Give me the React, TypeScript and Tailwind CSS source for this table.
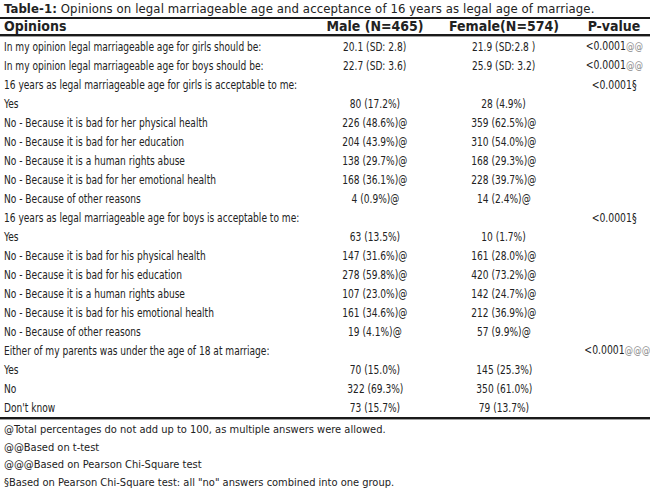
import React from 'react';

type Row = {
  label: string;
  male?: string;
  female?: string;
  p?: string;
  mark?: string;
};

const rows: Row[] = [
  { label: 'In my opinion legal marriageable age for girls should be:', male: '20.1 (SD: 2.8)', female: '21.9 (SD:2.8 )', p: '<0.0001', mark: '@@' },
  { label: 'In my opinion legal marriageable age for boys should be:', male: '22.7 (SD: 3.6)', female: '25.9 (SD: 3.2)', p: '<0.0001', mark: '@@' },
  { label: '16 years as legal marriageable age for girls is acceptable to me:', p: '<0.0001§' },
  { label: 'Yes', male: '80 (17.2%)', female: '28 (4.9%)' },
  { label: 'No - Because it is bad for her physical health', male: '226 (48.6%)@', female: '359 (62.5%)@' },
  { label: 'No - Because it is bad for her education', male: '204 (43.9%)@', female: '310 (54.0%)@' },
  { label: 'No - Because it is a human rights abuse', male: '138 (29.7%)@', female: '168 (29.3%)@' },
  { label: 'No - Because it is bad for her emotional health', male: '168 (36.1%)@', female: '228 (39.7%)@' },
  { label: 'No - Because of other reasons', male: '4 (0.9%)@', female: '14 (2.4%)@' },
  { label: '16 years as legal marriageable age for boys is acceptable to me:', p: '<0.0001§' },
  { label: 'Yes', male: '63 (13.5%)', female: '10 (1.7%)' },
  { label: 'No - Because it is bad for his physical health', male: '147 (31.6%)@', female: '161 (28.0%)@' },
  { label: 'No - Because it is bad for his education', male: '278 (59.8%)@', female: '420 (73.2%)@' },
  { label: 'No - Because it is a human rights abuse', male: '107 (23.0%)@', female: '142 (24.7%)@' },
  { label: 'No - Because it is bad for his emotional health', male: '161 (34.6%)@', female: '212 (36.9%)@' },
  { label: 'No - Because of other reasons', male: '19 (4.1%)@', female: '57 (9.9%)@' },
  { label: 'Either of my parents was under the age of 18 at marriage:', p: '<0.0001', mark: '@@@' },
  { label: 'Yes', male: '70 (15.0%)', female: '145 (25.3%)' },
  { label: 'No', male: '322 (69.3%)', female: '350 (61.0%)' },
  { label: "Don't know", male: '73 (15.7%)', female: '79 (13.7%)' },
];

const notes = [
  '@Total percentages do not add up to 100, as multiple answers were allowed.',
  '@@Based on t-test',
  '@@@Based on Pearson Chi-Square test',
  '§Based on Pearson Chi-Square test: all "no" answers combined into one group.',
];

const grid = 'grid grid-cols-[317px_108px_150px_70px] items-center';

export default function App() {
  return (
    <div
      className="w-[650px] h-[488px] bg-white text-[#222] overflow-hidden"
      style={{ fontFamily: '"DejaVu Sans Condensed", "Liberation Sans Narrow", "Liberation Sans", sans-serif' }}
    >
      <div className="h-[17px] pl-1 pt-[1px] text-[13px] leading-[15px] tracking-[0.1px] whitespace-nowrap">
        <span className="font-bold">Table-1:</span> Opinions on legal marriageable age and acceptance of 16 years as legal age of marriage.
      </div>

      <div className="border-t-2 border-[#1a1a1a]">
        <div className={`${grid} h-[15px] pl-1 text-[14px] leading-[15px] font-bold`}>
          <div>Opinions</div>
          <div className="text-center">Male (N=465)</div>
          <div className="text-center">Female(N=574)</div>
          <div className="text-center">P-value</div>
        </div>
        <div className="border-t-2 border-[#1a1a1a] border-b border-b-[#a0a0a0] h-0" />

        <div className="text-[12px] leading-[14px]">
          {rows.map((r, i) => (
            <div key={i} className={`${grid} h-[19px] pl-1`}>
              <div className="whitespace-nowrap">
                <span className="inline-block origin-left scale-x-[0.84]">{r.label}</span>
              </div>
              <div className="text-center whitespace-nowrap">
                <span className="inline-block scale-x-[0.84]">{r.male}</span>
              </div>
              <div className="text-center whitespace-nowrap">
                <span className="inline-block scale-x-[0.84]">{r.female}</span>
              </div>
              <div className="text-center whitespace-nowrap">
                <span className="inline-block scale-x-[0.86]">
                  {r.p}
                  {r.mark && <span className="text-[#8c8c8c] text-[11px]">{r.mark}</span>}
                </span>
              </div>
            </div>
          ))}
        </div>

        <div className="border-t-2 border-[#1a1a1a] border-b border-b-[#a0a0a0] h-0" />
      </div>

      <div className="pl-1 pt-[1px] text-[11px]">
        {notes.map((n, i) => (
          <div key={i} className="h-[17.5px] leading-[17.5px] whitespace-nowrap">{n}</div>
        ))}
      </div>
    </div>
  );
}
